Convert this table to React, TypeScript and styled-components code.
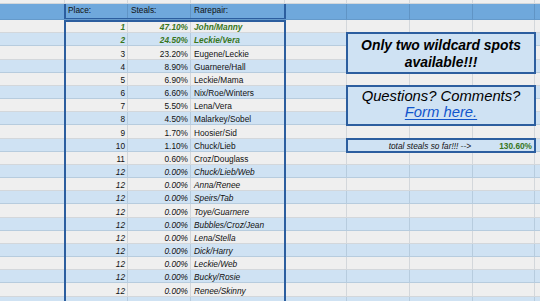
import React from 'react';
import styled, { createGlobalStyle, css } from 'styled-components';

type Tone = 'grey' | 'blue' | 'head';
type Look = 'plain' | 'lead' | 'tail';

type Pair = { place: number; steals: string; names: string };

const pairs: Pair[] = [
    { place: 1, steals: '47.10%', names: 'John/Manny' },
    { place: 2, steals: '24.50%', names: 'Leckie/Vera' },
    { place: 3, steals: '23.20%', names: 'Eugene/Leckie' },
    { place: 4, steals: '8.90%', names: 'Guarnere/Hall' },
    { place: 5, steals: '6.90%', names: 'Leckie/Mama' },
    { place: 6, steals: '6.60%', names: 'Nix/Roe/Winters' },
    { place: 7, steals: '5.50%', names: 'Lena/Vera' },
    { place: 8, steals: '4.50%', names: 'Malarkey/Sobel' },
    { place: 9, steals: '1.70%', names: 'Hoosier/Sid' },
    { place: 10, steals: '1.10%', names: 'Chuck/Lieb' },
    { place: 11, steals: '0.60%', names: 'Croz/Douglass' },
    { place: 12, steals: '0.00%', names: 'Chuck/Lieb/Web' },
    { place: 12, steals: '0.00%', names: 'Anna/Renee' },
    { place: 12, steals: '0.00%', names: 'Speirs/Tab' },
    { place: 12, steals: '0.00%', names: 'Toye/Guarnere' },
    { place: 12, steals: '0.00%', names: 'Bubbles/Croz/Jean' },
    { place: 12, steals: '0.00%', names: 'Lena/Stella' },
    { place: 12, steals: '0.00%', names: 'Dick/Harry' },
    { place: 12, steals: '0.00%', names: 'Leckie/Web' },
    { place: 12, steals: '0.00%', names: 'Bucky/Rosie' },
    { place: 12, steals: '0.00%', names: 'Renee/Skinny' },
];

// 9 visible sheet columns, 22 data rows (the last one cut off by the window)
const COLUMN_COUNT = 9;
const DATA_ROWS = 22;

const tones: Record<Tone, string> = {
    grey: '#efefef',
    blue: '#cfe2f3',
    head: '#6fa8dc',
};

const looks: Record<Look, ReturnType<typeof css>> = {
    plain: css``,
    lead: css`
        font-weight: bold;
        font-style: italic;
        color: #38761d;
    `,
    tail: css`
        font-style: italic;
    `,
};

const GlobalStyle = createGlobalStyle`
    html, body {
        margin: 0;
        padding: 0;
        background: #efefef;
        overflow: hidden;
    }
    body {
        font-family: 'Liberation Sans', Arial, sans-serif;
    }
`;

const Sheet = styled.div`
    display: grid;
    grid-template-columns: 65px 63px 63px 94px 62px 63px 63px 62px 1fr;
    grid-template-rows: 4px 16px repeat(${DATA_ROWS}, 13.18px);
    width: 540px;
    height: 301px;
    overflow: hidden;
    font-size: 8.3px;
    color: #111;
`;

const Cell = styled.div<{ $r: number; $c: number; $tone: Tone; $align?: 'left' | 'right'; $look?: Look }>`
    grid-row: ${(p) => p.$r};
    grid-column: ${(p) => p.$c};
    box-sizing: border-box;
    display: flex;
    align-items: flex-end;
    justify-content: ${(p) => (p.$align === 'right' ? 'flex-end' : 'flex-start')};
    padding: 0 2px 0 3px;
    line-height: 10px;
    white-space: nowrap;
    overflow: hidden;
    background: ${(p) => tones[p.$tone]};
    border-right: 1px solid rgba(40, 70, 100, 0.14);
    border-bottom: 1px solid rgba(40, 70, 100, 0.14);
    ${(p) => looks[p.$look ?? 'plain']}
`;

const HeadCell = styled(Cell)`
    align-items: flex-start;
    padding-top: 1px;
    border-right-color: rgba(30, 60, 100, 0.18);
`;

// a bordered range drawn over the cells it spans
const Range = styled.div<{ $cols: string; $rows: string }>`
    grid-column: ${(p) => p.$cols};
    grid-row: ${(p) => p.$rows};
    margin: -1px;
    border: 2px solid #2c5e9f;
    pointer-events: none;
`;

const HeaderRange = styled(Range)`
    margin: 0 -1px 1.5px;
    border-top: none;
    border-bottom-width: 1.5px;
`;

const DataRange = styled(Range)`
    margin: -0.5px -1px -1px;
`;

const Callout = styled(Range)<{ $size: number; $bold?: boolean; $lift: number }>`
    box-sizing: border-box;
    display: flex;
    flex-direction: column;
    align-items: center;
    justify-content: center;
    background: #cfe2f3;
    color: #000;
    font-style: italic;
    font-weight: ${(p) => (p.$bold ? 'bold' : 'normal')};
    font-size: ${(p) => p.$size}px;
    line-height: ${(p) => (p.$bold ? 17.6 : 16)}px;
    padding: ${(p) => (p.$lift < 0 ? -p.$lift : 0)}px 0 ${(p) => (p.$lift > 0 ? p.$lift : 0)}px;
    pointer-events: auto;
`;

const FormLink = styled.a`
    color: #1155cc;
    text-decoration: underline;
    text-decoration-thickness: 1px;
    text-underline-offset: 1.5px;
`;

const TotalRange = styled(Range)`
    display: grid;
    grid-template-columns: 1fr 62px;
    align-items: end;
    background: #cfe2f3;
    line-height: 10px;
`;

const TotalLabel = styled.span`
    font-style: italic;
    text-align: right;
    padding-right: 1px;
    color: #111;
`;

const TotalValue = styled.span`
    font-weight: bold;
    text-align: right;
    padding-right: 2px;
    color: #38761d;
`;

const blankCells = (row: number, tone: Tone, from: number) =>
    Array.from({ length: COLUMN_COUNT - from + 1 }, (_, i) => (
        <Cell key={`${row}-${from + i}`} $r={row} $c={from + i} $tone={tone} />
    ));

const lookFor = (index: number): Look => (index < 2 ? 'lead' : index >= 11 ? 'tail' : 'plain');

const headings = ['', 'Place:', 'Steals:', 'Rarepair:', '', '', '', '', ''];

export default function App() {
    const dataRows = Array.from({ length: DATA_ROWS }, (_, i) => {
        const tone: Tone = i % 2 === 0 ? 'grey' : 'blue';
        const pair = pairs[i];
        const row = i + 3;
        if (!pair) return blankCells(row, tone, 1);
        const look = lookFor(i);
        return [
            <Cell key={`${row}-1`} $r={row} $c={1} $tone={tone} />,
            <Cell key={`${row}-2`} $r={row} $c={2} $tone={tone} $align="right" $look={look}>
                {pair.place}
            </Cell>,
            <Cell key={`${row}-3`} $r={row} $c={3} $tone={tone} $align="right" $look={look}>
                {pair.steals}
            </Cell>,
            <Cell key={`${row}-4`} $r={row} $c={4} $tone={tone} $look={look}>
                {pair.names}
            </Cell>,
            ...blankCells(row, tone, 5),
        ];
    });

    return (
        <>
            <GlobalStyle />
            <Sheet>
                {blankCells(1, 'grey', 1)}

                {headings.map((label, i) => (
                    <HeadCell key={`h-${i}`} $r={2} $c={i + 1} $tone="head">
                        {label}
                    </HeadCell>
                ))}

                {dataRows}

                <HeaderRange $cols="2 / 5" $rows="2 / 3" />
                <DataRange $cols="2 / 5" $rows="3 / 25" />

                <Callout $cols="6 / 9" $rows="4 / 7" $size={13.9} $bold $lift={-3}>
                    <span>Only two wildcard spots</span>
                    <span>available!!!</span>
                </Callout>

                <Callout $cols="6 / 9" $rows="8 / 11" $size={14.8} $lift={2.4}>
                    <span>Questions? Comments?</span>
                    <FormLink href="#form">Form here.</FormLink>
                </Callout>

                <TotalRange $cols="6 / 9" $rows="12 / 13">
                    <TotalLabel>total steals so far!!! --&gt;</TotalLabel>
                    <TotalValue>130.60%</TotalValue>
                </TotalRange>
            </Sheet>
        </>
    );
}
